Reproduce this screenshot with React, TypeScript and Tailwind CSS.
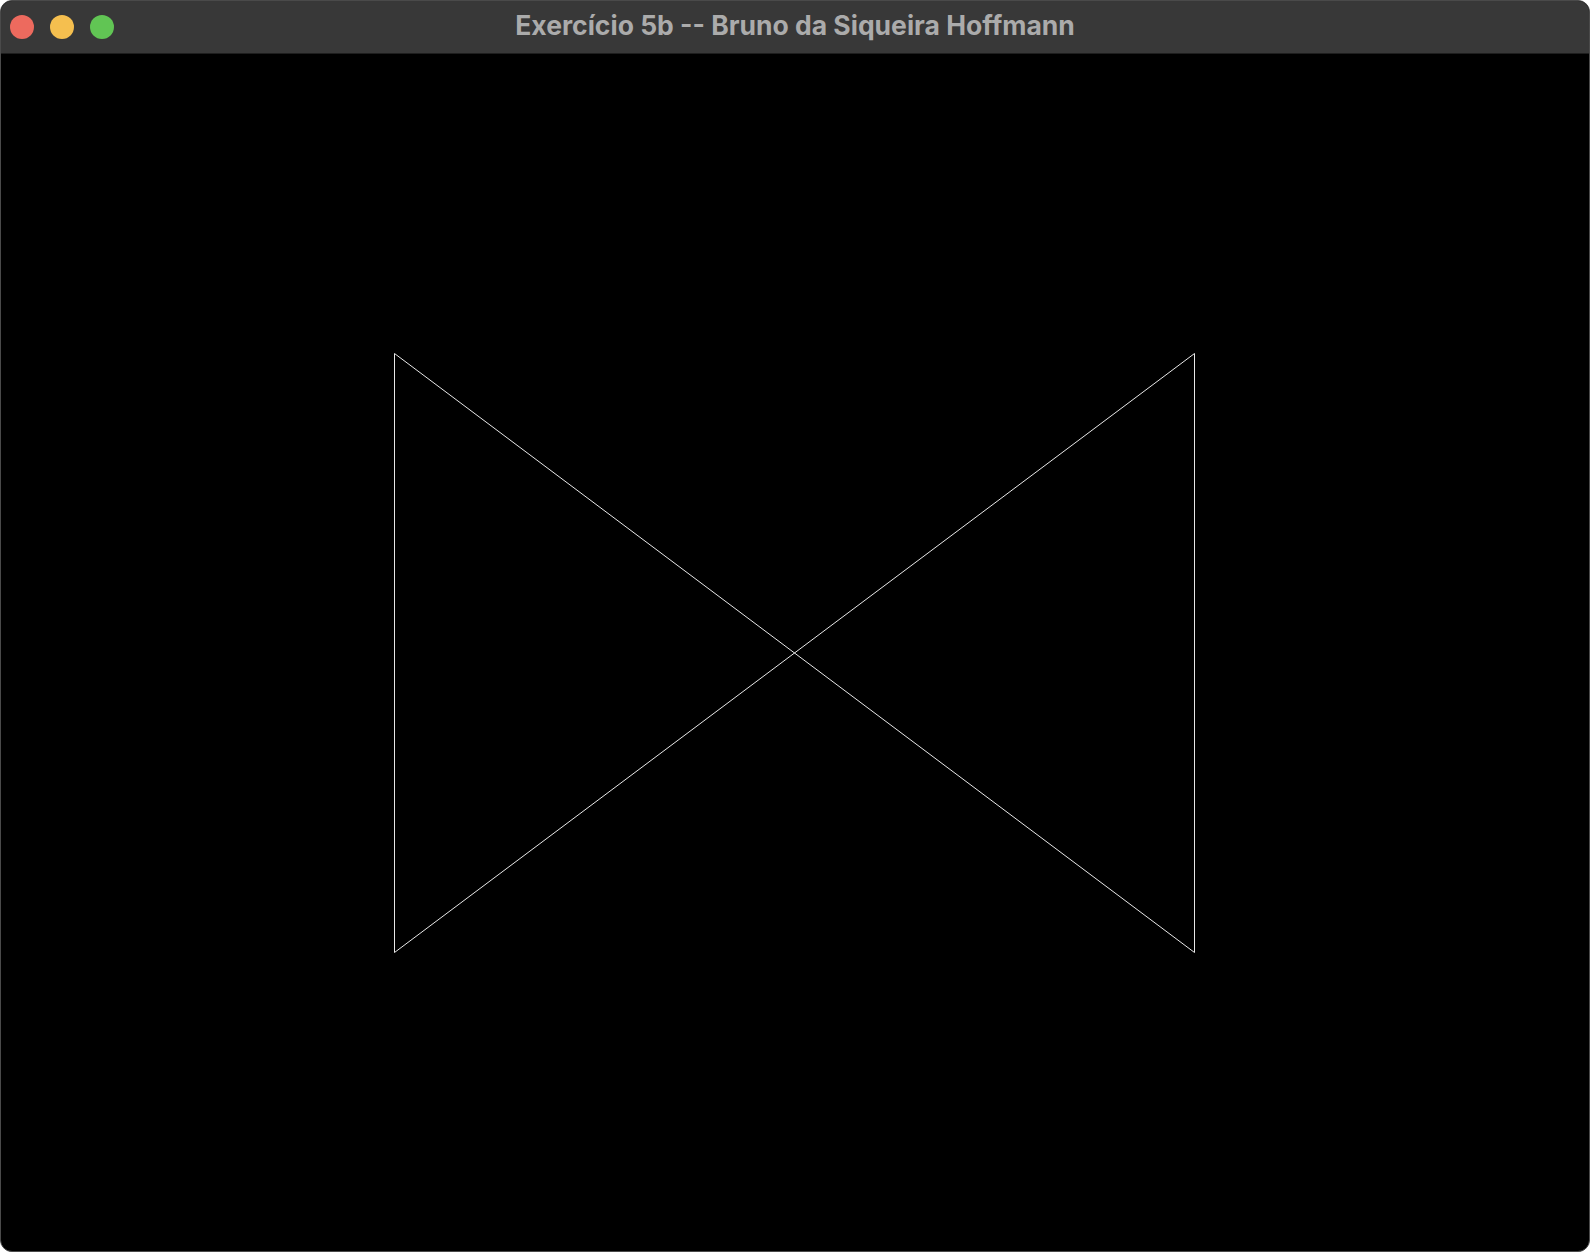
export default function App() {
  return (
    <div className="w-[1590px] h-[1252px] bg-white">
      <div className="w-full h-full rounded-[12px] overflow-hidden bg-black flex flex-col border border-[#4a4a4a]">
        {/* Title bar */}
        <div className="h-[53px] shrink-0 bg-[#383838] border-b border-[#1e1e1e] flex items-center relative">
          <div className="flex items-center gap-[16px] pl-[9px]">
            <span className="w-[24px] h-[24px] rounded-full bg-[#ed6a5e]" />
            <span className="w-[24px] h-[24px] rounded-full bg-[#f5bf4f]" />
            <span className="w-[24px] h-[24px] rounded-full bg-[#61c554]" />
          </div>
          <div className="absolute inset-0 flex items-center justify-center pb-[2px]">
            <span className="text-[26.5px] font-bold text-[#ababab]" style={{ fontFamily: 'Inter, "Noto Sans", sans-serif' }}>
              Exercício 5b -- Bruno da Siqueira Hoffmann
            </span>
          </div>
        </div>

        {/* GL canvas */}
        <div className="flex-1 relative">
          <svg className="absolute inset-0" width="1588" height="1197">
            <polygon
              points="393.5,299.5 1193.5,898.5 1193.5,299.5 393.5,898.5"
              fill="none"
              stroke="#e8e8e8"
              strokeWidth="1"
            />
          </svg>
        </div>
      </div>
    </div>
  )
}
